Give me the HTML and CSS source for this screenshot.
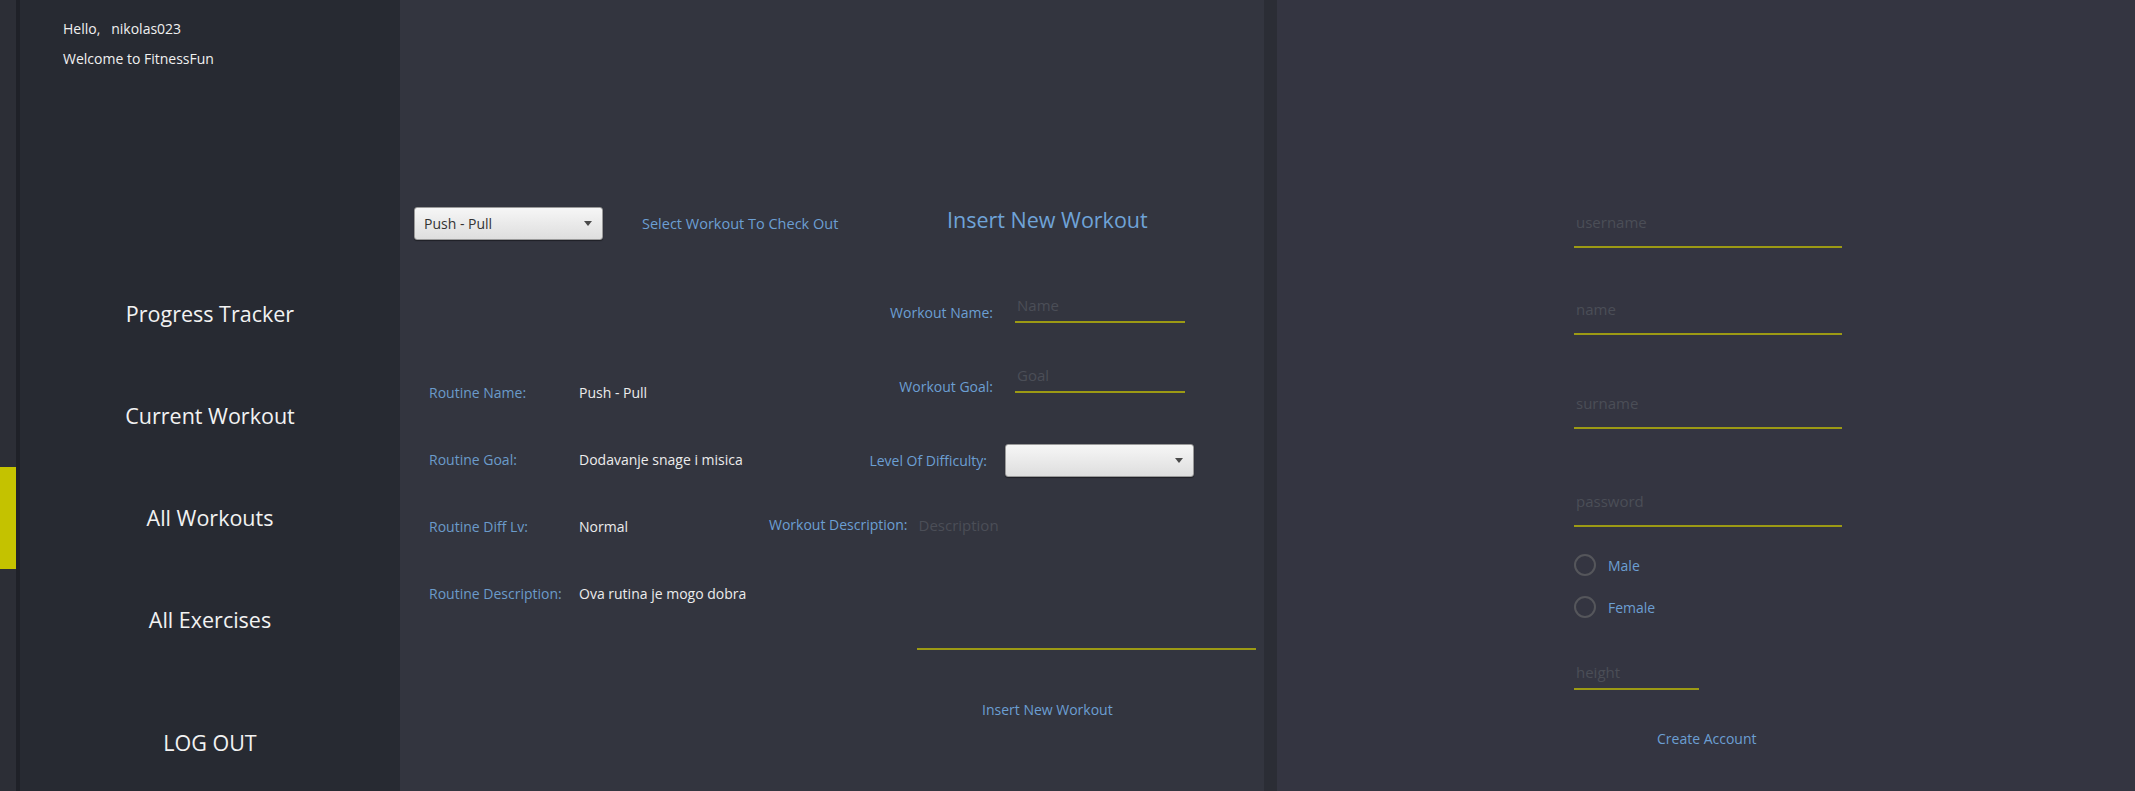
FILE: index.html
```html
<!DOCTYPE html>
<html lang="en">
<head>
    <meta charset="UTF-8">
    <title>FitnessFun</title>
    <link rel="stylesheet" href="styles.css">
</head>
<body>
    <div class="app">
        <div class="rail">
            <div class="rail-mark"></div>
        </div>

        <aside class="sidebar">
            <div class="greeting">
                <p>Hello,&nbsp;&nbsp; nikolas023</p>
                <p>Welcome to FitnessFun</p>
            </div>
            <nav class="nav">
                <a class="nav-item">Progress Tracker</a>
                <a class="nav-item">Current Workout</a>
                <a class="nav-item">All Workouts</a>
                <a class="nav-item">All Exercises</a>
                <a class="nav-item logout">LOG OUT</a>
            </nav>
        </aside>

        <main class="workouts">
            <section class="routine">
                <div class="picker">
                    <div class="combo combo-routine">
                        <span>Push - Pull</span>
                        <span class="arrow"></span>
                    </div>
                    <span class="hint">Select Workout To Check Out</span>
                </div>
                <dl class="routine-info">
                    <div class="info-row"><dt>Routine Name:</dt><dd>Push - Pull</dd></div>
                    <div class="info-row"><dt>Routine Goal:</dt><dd>Dodavanje snage i misica</dd></div>
                    <div class="info-row"><dt>Routine Diff Lv:</dt><dd>Normal</dd></div>
                    <div class="info-row"><dt>Routine Description:</dt><dd>Ova rutina je mogo dobra</dd></div>
                </dl>
            </section>

            <section class="new-workout">
                <h2>Insert New Workout</h2>
                <div class="form-row row-name">
                    <label>Workout Name:</label>
                    <input class="line-input" placeholder="Name">
                </div>
                <div class="form-row row-goal">
                    <label>Workout Goal:</label>
                    <input class="line-input" placeholder="Goal">
                </div>
                <div class="form-row row-level">
                    <label>Level Of Difficulty:</label>
                    <div class="combo combo-level">
                        <span></span>
                        <span class="arrow"></span>
                    </div>
                </div>
                <div class="form-row row-desc">
                    <label>Workout Description:</label>
                    <textarea class="line-area" placeholder="Description"></textarea>
                </div>
                <button class="link-btn insert-btn">Insert New Workout</button>
            </section>
        </main>

        <div class="divider"></div>

        <section class="register">
            <input class="reg-input f-user" placeholder="username">
            <input class="reg-input f-name" placeholder="name">
            <input class="reg-input f-surname" placeholder="surname">
            <input class="reg-input f-pass" type="password" placeholder="password">
            <label class="radio r-male"><span class="dot"></span>Male</label>
            <label class="radio r-female"><span class="dot"></span>Female</label>
            <input class="reg-input f-height" placeholder="height">
            <button class="link-btn create-btn">Create Account</button>
        </section>
    </div>
</body>
</html>
```

FILE: styles.css
```css
* {
    box-sizing: border-box;
    font-family: "Open Sans", "Noto Sans", sans-serif;
}

body {
    margin: 0;
    background-color: #343541;
    overflow: hidden;
}

.app {
    display: flex;
    height: 791px;
}

/* left rail with the active marker */
.rail {
    width: 16px;
    background-color: #2c2e36;
    padding-top: 467px;
    flex-shrink: 0;
}

.rail-mark {
    height: 102px;
    background-color: #c4c200;
}

.sidebar {
    width: 384px;
    flex-shrink: 0;
    background-color: #272a32;
    border-left: 4px solid #1f2128;
    display: flex;
    flex-direction: column;
}

.greeting {
    padding: 14px 0 0 43px;
}

.greeting p {
    margin: 0;
    color: #f0f0f0;
    font-size: 14px;
    line-height: 30px;
}

.nav {
    display: flex;
    flex-direction: column;
    margin-top: 189px;
}

.nav-item {
    height: 102px;
    line-height: 102px;
    text-align: center;
    color: #f2f2f2;
    font-size: 21.5px;
    cursor: pointer;
}

.nav-item.logout {
    margin-top: 21px;
}

/* middle panel */
.workouts {
    width: 864px;
    flex-shrink: 0;
    background-color: #33353f;
    display: flex;
    padding: 203px 0 0 14px;
}

.routine {
    width: 355px;
    flex-shrink: 0;
    padding-top: 4px;
}

.picker {
    display: flex;
    align-items: center;
    height: 33px;
}

.combo {
    height: 33px;
    flex-shrink: 0;
    display: flex;
    align-items: center;
    justify-content: space-between;
    padding: 0 10px 0 9px;
    background: linear-gradient(#f6f6f6, #dedede);
    border: 1px solid #9a9a9a;
    border-radius: 3px;
    box-shadow: 0 1px 1px rgba(0, 0, 0, 0.4);
    color: #333;
    font-size: 14px;
}

.combo-routine {
    width: 189px;
}

.combo-level {
    width: 189px;
}

.arrow {
    width: 0;
    height: 0;
    border-left: 4px solid transparent;
    border-right: 4px solid transparent;
    border-top: 5px solid #4a4a4a;
}

.hint {
    margin-left: 39px;
    color: #6c9fd3;
    font-size: 14.5px;
    white-space: nowrap;
}

.routine-info {
    margin: 119px 0 0 15px;
}

.info-row {
    display: flex;
    height: 67px;
    line-height: 67px;
    font-size: 14px;
}

.info-row dt {
    width: 150px;
    flex-shrink: 0;
    color: #6b9bca;
}

.info-row dd {
    margin: 0;
    color: #ececec;
    white-space: nowrap;
}

/* insert new workout form */
.new-workout {
    flex: 1;
    display: flex;
    flex-direction: column;
}

.new-workout h2 {
    margin: 0 0 0 178px;
    font-size: 21.5px;
    font-weight: normal;
    line-height: 33px;
    color: #6fa3d8;
}

.form-row {
    display: flex;
    align-items: flex-end;
}

.form-row label {
    color: #6c9fd3;
    font-size: 14px;
    line-height: 20px;
    text-align: right;
    white-space: nowrap;
}

.row-name {
    margin-top: 57px;
}

.row-goal {
    margin-top: 40px;
}

.row-goal label {
    margin-bottom: -4px;
}

.row-name label,
.row-goal label {
    width: 224px;
    margin-right: 22px;
}

.row-level {
    margin-top: 51px;
    align-items: center;
}

.row-level label {
    width: 218px;
    margin-right: 18px;
}

.row-desc {
    margin-top: 38px;
    align-items: flex-start;
}

.row-desc label {
    margin-right: 9px;
}

.line-input {
    width: 170px;
    height: 30px;
    padding: 0 2px 4px;
    background: transparent;
    border: none;
    border-bottom: 2px solid #9c9a14;
    outline: none;
    color: #ddd;
    font-size: 15px;
}

.line-area {
    width: 339px;
    height: 135px;
    padding: 0 2px;
    background: transparent;
    border: none;
    border-bottom: 2px solid #9c9a14;
    outline: none;
    resize: none;
    color: #ddd;
    font-size: 15px;
    line-height: 20px;
}

::placeholder {
    color: #4b4e57;
}

.link-btn {
    background: none;
    border: none;
    padding: 0;
    color: #6c9fd3;
    font-size: 14px;
    line-height: 20px;
    cursor: pointer;
}

.insert-btn {
    align-self: flex-start;
    margin: 50px 0 0 213px;
}

.divider {
    width: 13px;
    flex-shrink: 0;
    background-color: #2b2d35;
}

/* create account form */
.register {
    flex: 1;
    display: flex;
    flex-direction: column;
    align-items: flex-start;
    padding: 210px 0 0 297px;
    background-color: #343541;
}

.reg-input {
    width: 268px;
    height: 38px;
    padding: 0 2px 12px;
    background: transparent;
    border: none;
    border-bottom: 2px solid #9c9a14;
    outline: none;
    color: #ddd;
    font-size: 15px;
}

.f-name {
    margin-top: 49px;
}

.f-surname {
    margin-top: 56px;
}

.f-pass {
    margin-top: 60px;
}

.f-height {
    width: 125px;
    height: 30px;
    padding-bottom: 4px;
    margin-top: 38px;
}

.radio {
    display: flex;
    align-items: center;
    height: 30px;
    color: #6c9fd3;
    font-size: 14px;
}

.r-male {
    margin-top: 23px;
}

.r-female {
    margin-top: 12px;
}

.dot {
    width: 22px;
    height: 22px;
    border: 2px solid #55565b;
    border-radius: 50%;
    margin-right: 12px;
}

.create-btn {
    align-self: flex-start;
    margin: 39px 0 0 83px;
}
```
